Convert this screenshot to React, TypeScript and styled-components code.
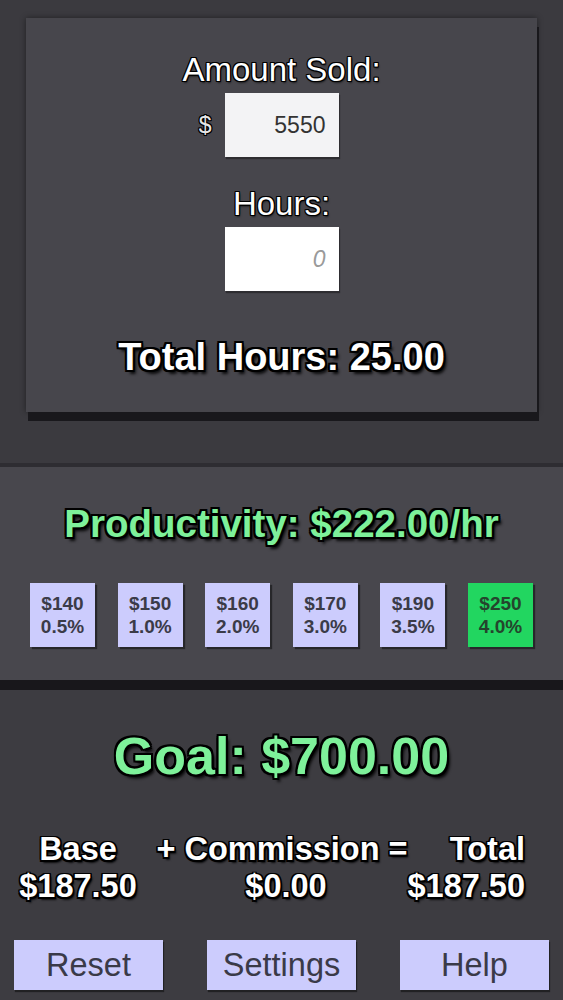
import React from "react";
import styled, { createGlobalStyle } from "styled-components";

const GlobalStyle = createGlobalStyle`
  html, body {
    margin: 0;
    padding: 0;
    background: #3b3a3f;
  }
  body {
    font-family: "Liberation Sans", Arial, sans-serif;
  }
`;

const outline = (w: number, blur: string) => `
  text-shadow:
    -${w}px -${w}px 0 #000,
    ${w}px -${w}px 0 #000,
    -${w}px ${w}px 0 #000,
    ${w}px ${w}px 0 #000,
    0 ${w}px 0 #000,
    0 -${w}px 0 #000,
    ${w}px 0 0 #000,
    -${w}px 0 0 #000,
    ${blur};
`;

const Page = styled.div`
  width: 563px;
  height: 1000px;
  overflow: hidden;
  display: flex;
  flex-direction: column;
  background: #3b3a3f;
`;

const Top = styled.div`
  padding: 18px 26px 51px 26px;
`;

const Card = styled.div`
  height: 394px;
  box-sizing: border-box;
  background: #47464c;
  box-shadow: 2px 9px 0 #19181c, 0 0 6px rgba(0, 0, 0, 0.45);
  display: flex;
  flex-direction: column;
  align-items: center;
  padding-top: 33px;
`;

const Label = styled.div`
  font-size: 33px;
  line-height: 38px;
  color: #fff;
  ${outline(1, "1px 2px 2px rgba(0,0,0,0.6)")}
`;

const InputRow = styled.div`
  width: 100%;
  display: grid;
  grid-template-columns: 1fr 114px 1fr;
  align-items: center;
  margin-top: 4px;
`;

const Dollar = styled.span`
  justify-self: end;
  margin-right: 13px;
  font-size: 23px;
  color: #e6e6e6;
  ${outline(1, "0 0 0 #000")}
`;

const Field = styled.input<{ $filled?: boolean }>`
  grid-column: 2;
  width: 114px;
  height: 64px;
  box-sizing: border-box;
  border: none;
  outline: none;
  padding: 0 13px 0 0;
  text-align: right;
  font-family: "Liberation Sans", Arial, sans-serif;
  font-size: 23px;
  color: #333;
  background: ${({ $filled }) => ($filled ? "#f3f3f5" : "#ffffff")};
  box-shadow: 1px 2px 1px rgba(0, 0, 0, 0.35);
  &::placeholder {
    color: #9a9a9a;
    font-style: italic;
  }
`;

const Gap = styled.div<{ $h: number }>`
  height: ${({ $h }) => $h}px;
`;

const TotalHours = styled.div`
  font-size: 38px;
  line-height: 44px;
  font-weight: bold;
  color: #fff;
  ${outline(2, "3px 4px 3px rgba(0,0,0,0.85)")}
`;

const Middle = styled.div`
  background: #48474d;
  border-top: 4px solid #2e2d32;
  border-bottom: 10px solid #18171b;
  padding: 34px 30px 33px 30px;
  display: flex;
  flex-direction: column;
  align-items: center;
  gap: 37px;
`;

const Green = styled.div<{ $size: number }>`
  font-size: ${({ $size }) => $size}px;
  line-height: ${({ $size }) => Math.round($size * 1.16)}px;
  font-weight: bold;
  color: #7ef19a;
  ${outline(2, "3px 4px 3px rgba(0,0,0,0.85)")}
`;

const Tiers = styled.div`
  width: 100%;
  display: flex;
  justify-content: space-between;
`;

const Tier = styled.div<{ $active?: boolean }>`
  width: 65px;
  height: 64px;
  box-sizing: border-box;
  display: flex;
  flex-direction: column;
  align-items: center;
  justify-content: center;
  font-size: 19px;
  line-height: 23px;
  font-weight: bold;
  background: ${({ $active }) => ($active ? "#22d660" : "#ccccfd")};
  color: ${({ $active }) => ($active ? "#24452d" : "#3b3b48")};
  box-shadow: 2px 2px 1px rgba(0, 0, 0, 0.45);
`;

const Bottom = styled.div`
  flex: 1;
  background: #3d3c41;
  display: flex;
  flex-direction: column;
  align-items: center;
  padding-top: 36px;
`;

const Breakdown = styled.div`
  width: 100%;
  box-sizing: border-box;
  margin-top: 45px;
  padding: 0 38px 0 18px;
  display: grid;
  grid-template-columns: 120px 288px minmax(0, 1fr);
  font-size: 32.5px;
  line-height: 37px;
  font-weight: bold;
  color: #fff;
  ${outline(1.5, "2px 3px 2px rgba(0,0,0,0.8)")}
`;

const Cell = styled.div<{ $align: "center" | "right"; $shift?: number }>`
  padding-left: ${({ $shift }) => $shift ?? 0}px;
  white-space: nowrap;
  display: flex;
  justify-content: ${({ $align }) => ($align === "right" ? "flex-end" : "center")};
`;

const Buttons = styled.div`
  width: 100%;
  box-sizing: border-box;
  margin-top: 35px;
  padding: 0 14px;
  display: flex;
  justify-content: space-between;
`;

const Button = styled.button`
  width: 149px;
  height: 50px;
  border: none;
  padding: 0;
  background: #ccccfd;
  color: #3a3a48;
  font-family: "Liberation Sans", Arial, sans-serif;
  font-size: 32.5px;
  box-shadow: 1px 2px 1px rgba(0, 0, 0, 0.45);
  cursor: pointer;
`;

const tiers = [
  { rate: "$140", pct: "0.5%" },
  { rate: "$150", pct: "1.0%" },
  { rate: "$160", pct: "2.0%" },
  { rate: "$170", pct: "3.0%" },
  { rate: "$190", pct: "3.5%" },
  { rate: "$250", pct: "4.0%", active: true },
];

export default function App() {
  const [sold, setSold] = React.useState("5550");
  const [hours, setHours] = React.useState("");

  return (
    <Page>
      <GlobalStyle />
      <Top>
        <Card>
          <Label>Amount Sold:</Label>
          <InputRow>
            <Dollar>$</Dollar>
            <Field $filled value={sold} onChange={(e) => setSold(e.target.value)} />
          </InputRow>
          <Gap $h={28} />
          <Label>Hours:</Label>
          <InputRow>
            <Field placeholder="0" value={hours} onChange={(e) => setHours(e.target.value)} />
          </InputRow>
          <Gap $h={44} />
          <TotalHours>Total Hours: 25.00</TotalHours>
        </Card>
      </Top>
      <Middle>
        <Green $size={38.5}>Productivity: $222.00/hr</Green>
        <Tiers>
          {tiers.map((t) => (
            <Tier key={t.rate} $active={t.active}>
              <span>{t.rate}</span>
              <span>{t.pct}</span>
            </Tier>
          ))}
        </Tiers>
      </Middle>
      <Bottom>
        <Green $size={52}>Goal: $700.00</Green>
        <Breakdown>
          <Cell $align="center">Base</Cell>
          <Cell $align="center">+ Commission =</Cell>
          <Cell $align="right">Total</Cell>
          <Cell $align="center">$187.50</Cell>
          <Cell $align="center" $shift={8}>$0.00</Cell>
          <Cell $align="right">$187.50</Cell>
        </Breakdown>
        <Buttons>
          <Button>Reset</Button>
          <Button>Settings</Button>
          <Button>Help</Button>
        </Buttons>
      </Bottom>
    </Page>
  );
}
